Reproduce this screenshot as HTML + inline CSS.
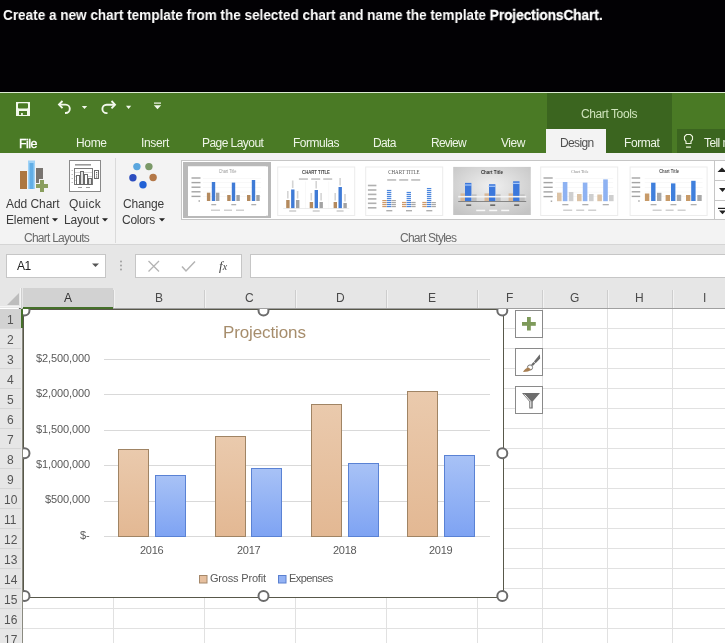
<!DOCTYPE html>
<html><head><meta charset="utf-8">
<style>
*{box-sizing:border-box;margin:0;padding:0}
html,body{width:725px;height:643px;overflow:hidden;background:#fff}
body{position:relative;font-family:"Liberation Sans",sans-serif}
.a{position:absolute}
.t{position:absolute;white-space:nowrap;line-height:1;will-change:transform}
svg{position:absolute;overflow:visible}
</style></head><body>
<div class="a" style="left:0px;top:0px;width:725px;height:92px;background:#020104;"></div>
<div class="t" id="instr" style="left:3px;top:7.57px;font-size:14.8px;color:#fff;font-weight:bold;transform:scaleX(0.92);transform-origin:0 0;letter-spacing:-0.04px">Create a new chart template from the selected chart and name the template <b id="pc" style="font-weight:bold;-webkit-text-stroke:0.3px #fff">ProjectionsChart</b>.</div>
<div class="a" style="left:0px;top:92px;width:725px;height:1px;background:#dcebd2;"></div>
<div class="a" style="left:0px;top:93px;width:725px;height:60px;background:#4a7a25;"></div>
<div class="a" style="left:547px;top:93px;width:125px;height:60px;background:#3b651f;"></div>
<div class="a" style="left:546px;top:129px;width:60px;height:24px;background:#f3f3f3;"></div>
<div class="a" style="left:677px;top:129px;width:48px;height:24px;background:#3b651f;"></div>
<div class="t" style="left:581.00px;top:108.04px;font-size:12px;color:#cfe4bc;letter-spacing:-0.407px;">Chart Tools</div>
<div class="t" style="left:19.00px;top:137.62px;font-size:12.5px;color:#ffffff;letter-spacing:-0.535px;-webkit-text-stroke:0.35px #fff">File</div>
<div class="t" style="left:76.10px;top:137.24px;font-size:12px;color:#eef5e8;letter-spacing:-0.353px;">Home</div>
<div class="t" style="left:140.70px;top:137.24px;font-size:12px;color:#eef5e8;letter-spacing:-0.336px;">Insert</div>
<div class="t" style="left:201.50px;top:137.24px;font-size:12px;color:#eef5e8;letter-spacing:-0.554px;">Page Layout</div>
<div class="t" style="left:292.50px;top:137.24px;font-size:12px;color:#eef5e8;letter-spacing:-0.501px;">Formulas</div>
<div class="t" style="left:373.20px;top:137.24px;font-size:12px;color:#eef5e8;letter-spacing:-0.637px;">Data</div>
<div class="t" style="left:431.20px;top:137.24px;font-size:12px;color:#eef5e8;letter-spacing:-0.758px;">Review</div>
<div class="t" style="left:500.70px;top:137.24px;font-size:12px;color:#eef5e8;letter-spacing:-0.449px;">View</div>
<div class="t" style="left:623.60px;top:137.24px;font-size:12px;color:#eef5e8;letter-spacing:-0.434px;">Format</div>
<div class="t" style="left:559.60px;top:137.24px;font-size:12px;color:#505050;letter-spacing:-0.626px;">Design</div>
<div class="t" style="left:704.30px;top:137.24px;font-size:12px;color:#eef5e8;letter-spacing:-0.573px;">Tell me</div>
<svg style="left:0;top:0" width="1" height="1"><path d="M686 143.5 V141.5 L684.5 139.5 V136.5 L686.5 134.5 H690.5 L692.5 136.5 V139.5 L691 141.5 V143.5 Z" fill="none" stroke="#eef5e0" stroke-width="1.1"/><rect x="686" y="146.5" width="5" height="1.2" fill="#eef5e0"/></svg>
<svg style="left:0;top:0" width="1" height="1"><rect x="16" y="102" width="14" height="14" fill="#f2f8ec"/><rect x="18" y="103.2" width="10" height="5.4" rx="1" fill="#4a7a25"/><rect x="19" y="111" width="8" height="4" fill="#4a7a25"/><rect x="21.1" y="113" width="1.7" height="2" fill="#f2f8ec"/><path d="M62.5 101 L59 104.6 L62.5 108.2" fill="none" stroke="#f2f8ec" stroke-width="1.9" stroke-linejoin="miter"/><path d="M59.5 104.6 H65.6 A4.2 4.2 0 0 1 65.6 113 H65" fill="none" stroke="#f2f8ec" stroke-width="1.9"/><path d="M81.8 106 H87.2 L84.5 109 Z" fill="#f2f8ec"/><path d="M111.5 101 L115 104.7 L111.5 108.4" fill="none" stroke="#f2f8ec" stroke-width="1.9"/><path d="M114.5 104.7 H106.6 A4.2 4.2 0 0 0 106.6 113.1 H107.5" fill="none" stroke="#f2f8ec" stroke-width="1.9"/><path d="M126 105.8 H131.2 L128.6 108.9 Z" fill="#f2f8ec"/><rect x="154" y="102.5" width="7" height="1.2" fill="#f2f8ec"/><path d="M153.8 105.3 H161.2 L157.5 109.2 Z" fill="#f2f8ec"/></svg>
<div class="a" style="left:0px;top:153px;width:725px;height:91px;background:#f3f3f3;"></div>
<div class="a" style="left:0px;top:244px;width:725px;height:1px;background:#d5d5d5;"></div>
<div class="a" style="left:115px;top:158px;width:1px;height:85px;background:#dadada;"></div>
<div class="t" style="left:5.50px;top:198.14px;font-size:12px;color:#3c3c3c;letter-spacing:-0.059px;">Add Chart</div>
<div class="t" style="left:5.50px;top:214.34px;font-size:12px;color:#3c3c3c;letter-spacing:-0.146px;">Element</div>
<svg style="left:52px;top:218px" width="6" height="4"><path d="M0 0.3 H6 L3 3.6Z" fill="#222"/></svg>
<div class="t" style="left:69.00px;top:198.14px;font-size:12px;color:#3c3c3c;letter-spacing:0.265px;">Quick</div>
<div class="t" style="left:64.00px;top:214.34px;font-size:12px;color:#3c3c3c;letter-spacing:-0.172px;">Layout</div>
<svg style="left:102px;top:218px" width="6" height="4"><path d="M0 0.3 H6 L3 3.6Z" fill="#222"/></svg>
<div class="t" style="left:123.00px;top:198.14px;font-size:12px;color:#3c3c3c;letter-spacing:-0.173px;">Change</div>
<div class="t" style="left:122.00px;top:214.34px;font-size:12px;color:#3c3c3c;letter-spacing:-0.280px;">Colors</div>
<svg style="left:159px;top:218px" width="6" height="4"><path d="M0 0.3 H6 L3 3.6Z" fill="#222"/></svg>
<div class="t" style="left:24.00px;top:231.84px;font-size:12px;color:#6a6a6a;letter-spacing:-0.747px;">Chart Layouts</div>
<div class="t" style="left:399.70px;top:231.84px;font-size:12px;color:#6a6a6a;letter-spacing:-0.763px;">Chart Styles</div>
<svg style="left:0;top:0" width="1" height="1" viewBox="0 0 1 1"><rect x="20" y="171" width="7" height="18" fill="#ad7740"/><rect x="28" y="160.5" width="7" height="28.5" fill="#9fd2f6"/><rect x="29.5" y="163" width="4" height="26" fill="#62aee6"/><rect x="36" y="168" width="7" height="15" fill="#787470"/><path d="M39 179 h6 v4 h4 v6 h-4 v4 h-6 v-4 h-4 v-6 h4z" fill="#f3f3f3"/><rect x="40" y="180" width="4" height="12" fill="#8a9e5e"/><rect x="36" y="184" width="12" height="4" fill="#8a9e5e"/></svg>
<svg style="left:0;top:0" width="1" height="1"><rect x="69.5" y="160.5" width="31" height="31" fill="#fff" stroke="#8a8a8a"/><rect x="75" y="164" width="16" height="1.6" fill="#9a9a9a"/><rect x="74.5" y="168.5" width="18" height="16" fill="#fff" stroke="#7a7a7a"/><rect x="75" y="172" width="17" height="0.6" fill="#bbb"/><rect x="75" y="176" width="17" height="0.6" fill="#bbb"/><rect x="75" y="180" width="17" height="0.6" fill="#bbb"/><rect x="76.5" y="175.5" width="3" height="9" fill="#fff" stroke="#6a6a6a"/><rect x="80.5" y="171.5" width="3" height="13" fill="#e0e0e0" stroke="#6a6a6a"/><rect x="84.5" y="174.5" width="3" height="10" fill="#fff" stroke="#6a6a6a"/><rect x="88.5" y="178.5" width="3" height="6" fill="#e0e0e0" stroke="#6a6a6a"/><rect x="94.5" y="170.5" width="4" height="8" fill="#fff" stroke="#6a6a6a"/><rect x="96" y="172" width="1.2" height="1.2" fill="#666"/><rect x="96" y="174.2" width="1.2" height="1.2" fill="#666"/><rect x="96" y="176.4" width="1.2" height="1.2" fill="#666"/><rect x="71.5" y="170" width="1.5" height="0.6" fill="#999"/><rect x="71.5" y="174" width="1.5" height="0.6" fill="#999"/><rect x="71.5" y="178" width="1.5" height="0.6" fill="#999"/><rect x="71.5" y="182" width="1.5" height="0.6" fill="#999"/><rect x="78" y="187" width="4" height="1" fill="#999"/><rect x="86" y="187" width="4" height="1" fill="#999"/></svg>
<svg style="left:0;top:0" width="1" height="1"><circle cx="136.9" cy="166.6" r="3.7" fill="#5aa6de"/><circle cx="148.9" cy="166.6" r="3.7" fill="#7b9968"/><circle cx="132.9" cy="177.8" r="3.7" fill="#2c4dbf"/><circle cx="153.1" cy="177.5" r="3.7" fill="#b47848"/><circle cx="143" cy="184.7" r="3.7" fill="#2262d6"/></svg>
<div class="a" style="left:181px;top:160px;width:550px;height:60px;background:#ffffff;border:1px solid #c6c6c6"></div>
<div class="a" style="left:714px;top:160px;width:1px;height:60px;background:#c6c6c6;"></div>
<div class="a" style="left:714px;top:180px;width:11px;height:1px;background:#c6c6c6;"></div>
<div class="a" style="left:714px;top:200px;width:11px;height:1px;background:#c6c6c6;"></div>
<svg style="left:0;top:0" width="1" height="1"><path d="M717.5 172 L722 167.5 L726.5 172Z" fill="#222"/><path d="M719 188 H726 L722.5 192Z" fill="#222"/><rect x="718" y="207.8" width="8" height="1.2" fill="#222"/><path d="M719 210.5 H726 L722.5 214.2Z" fill="#222"/></svg>
<div class="a" style="left:183px;top:162px;width:88px;height:56px;background:#b9b9b9;"></div>
<svg style="left:0;top:0" width="1" height="1"><rect x="188" y="166.5" width="80" height="49.2" fill="#fff"/><rect x="188.5" y="167.0" width="77" height="48.5" fill="#fff" stroke="#fff"/><text x="218.7" y="173.3" font-family="Liberation Sans" font-size="4.6" textLength="17.7" lengthAdjust="spacingAndGlyphs" fill="#9a9a9a">Chart Title</text><rect x="191.5" y="177.3" width="9.0" height="1.4" fill="#a4a4a4"/><rect x="203.0" y="178.0" width="58" height="0.4" fill="#eeeeee"/><rect x="191.5" y="181.9" width="9.0" height="1.4" fill="#a4a4a4"/><rect x="203.0" y="182.6" width="58" height="0.4" fill="#eeeeee"/><rect x="191.5" y="186.5" width="9.0" height="1.4" fill="#a4a4a4"/><rect x="203.0" y="187.2" width="58" height="0.4" fill="#eeeeee"/><rect x="191.5" y="191.1" width="9.0" height="1.4" fill="#a4a4a4"/><rect x="203.0" y="191.8" width="58" height="0.4" fill="#eeeeee"/><rect x="191.5" y="195.7" width="9.0" height="1.4" fill="#a4a4a4"/><rect x="203.0" y="196.4" width="58" height="0.4" fill="#eeeeee"/><rect x="198.5" y="200.3" width="1.5" height="1.4" fill="#a4a4a4"/><rect x="206.9" y="192.7" width="3.4" height="8.3" fill="#b48a5e"/><rect x="211.8" y="182.0" width="3.4" height="19.0" fill="#3f7bd6"/><rect x="216.0" y="192.7" width="3.4" height="8.3" fill="#a3a3a3"/><rect x="227.2" y="195.0" width="3.4" height="6.0" fill="#b48a5e"/><rect x="231.8" y="182.6" width="3.4" height="18.4" fill="#3f7bd6"/><rect x="236.4" y="195.0" width="3.4" height="6.0" fill="#a3a3a3"/><rect x="247.0" y="195.0" width="3.4" height="6.0" fill="#b48a5e"/><rect x="251.8" y="180.0" width="3.4" height="21.0" fill="#3f7bd6"/><rect x="256.3" y="195.0" width="3.4" height="6.0" fill="#a3a3a3"/><rect x="211.3" y="204.0" width="4.9" height="1.3" fill="#b0b0b0"/><rect x="231.3" y="204.0" width="4.9" height="1.3" fill="#b0b0b0"/><rect x="251.3" y="204.0" width="4.9" height="1.3" fill="#b0b0b0"/><rect x="211.0" y="209.5" width="9.0" height="1.5" fill="#d0d0d0"/><rect x="224.0" y="209.5" width="8.0" height="1.5" fill="#d0d0d0"/><rect x="236.0" y="209.5" width="8.0" height="1.5" fill="#d0d0d0"/><rect x="277.7" y="167.0" width="77" height="48.5" fill="#fff" stroke="#ececec"/><text x="302.1" y="173.7" font-family="Liberation Sans" font-size="5" textLength="27.8" lengthAdjust="spacingAndGlyphs" fill="#444" font-weight="bold">CHART TITLE</text><rect x="298.9" y="178.3" width="9.0" height="1.5" fill="#c0c0c0"/><rect x="311.2" y="178.3" width="9.0" height="1.5" fill="#c0c0c0"/><rect x="323.2" y="178.3" width="9.0" height="1.5" fill="#c0c0c0"/><rect x="286.2" y="200.0" width="3.4" height="8.2" fill="#b48a5e"/><rect x="287.0" y="191.0" width="1.6" height="7.5" fill="#d4d4d4"/><rect x="291.1" y="189.5" width="3.4" height="18.7" fill="#3f7bd6"/><rect x="291.9" y="180.5" width="1.6" height="7.5" fill="#d4d4d4"/><rect x="296.0" y="200.0" width="3.4" height="8.2" fill="#a3a3a3"/><rect x="296.8" y="191.0" width="1.6" height="7.5" fill="#d4d4d4"/><rect x="289.2" y="210.3" width="7.0" height="1.4" fill="#c8c8c8"/><rect x="305.2" y="181.5" width="0.4" height="27" fill="#eeeeee"/><rect x="309.7" y="202.0" width="3.4" height="6.2" fill="#b48a5e"/><rect x="310.5" y="193.0" width="1.6" height="7.5" fill="#d4d4d4"/><rect x="314.6" y="190.0" width="3.4" height="18.2" fill="#3f7bd6"/><rect x="315.4" y="181.0" width="1.6" height="7.5" fill="#d4d4d4"/><rect x="319.5" y="202.0" width="3.4" height="6.2" fill="#a3a3a3"/><rect x="320.3" y="193.0" width="1.6" height="7.5" fill="#d4d4d4"/><rect x="312.7" y="210.3" width="7.0" height="1.4" fill="#c8c8c8"/><rect x="328.7" y="181.5" width="0.4" height="27" fill="#eeeeee"/><rect x="333.6" y="202.0" width="3.4" height="6.2" fill="#b48a5e"/><rect x="334.4" y="193.0" width="1.6" height="7.5" fill="#d4d4d4"/><rect x="338.5" y="187.0" width="3.4" height="21.2" fill="#3f7bd6"/><rect x="339.3" y="178.0" width="1.6" height="7.5" fill="#d4d4d4"/><rect x="343.4" y="203.0" width="3.4" height="5.2" fill="#a3a3a3"/><rect x="344.2" y="194.0" width="1.6" height="7.5" fill="#d4d4d4"/><rect x="336.6" y="210.3" width="7.0" height="1.4" fill="#c8c8c8"/><rect x="283.2" y="208.2" width="66" height="0.5" fill="#d8d8d8"/><rect x="365.7" y="167.0" width="77" height="48.5" fill="#fff" stroke="#ececec"/><text x="388.2" y="174.0" font-family="Liberation Serif" font-size="5.5" textLength="31.4" lengthAdjust="spacingAndGlyphs" fill="#555">CHART TITLE</text><rect x="387.2" y="179.2" width="9.0" height="1.5" fill="#b8b8b8"/><rect x="399.2" y="179.2" width="9.0" height="1.5" fill="#b8b8b8"/><rect x="411.2" y="179.2" width="9.0" height="1.5" fill="#b8b8b8"/><defs><pattern id="strB" width="4" height="2" patternUnits="userSpaceOnUse"><rect width="4" height="1.2" fill="#4a86de"/></pattern><pattern id="strR" width="4" height="2" patternUnits="userSpaceOnUse"><rect width="4" height="1.2" fill="#d09a68"/></pattern><pattern id="strG" width="4" height="2" patternUnits="userSpaceOnUse"><rect width="4" height="1.2" fill="#a8a8a8"/></pattern></defs><rect x="367.9" y="184.7" width="8.5" height="1.6" fill="#b0b0b0"/><rect x="367.9" y="189.2" width="8.5" height="1.6" fill="#b0b0b0"/><rect x="367.9" y="193.6" width="8.5" height="1.6" fill="#b0b0b0"/><rect x="367.9" y="198.1" width="8.5" height="1.6" fill="#b0b0b0"/><rect x="367.9" y="202.5" width="8.5" height="1.6" fill="#b0b0b0"/><rect x="367.9" y="207.0" width="8.5" height="1.6" fill="#b0b0b0"/><rect x="382.3" y="200.0" width="4.4" height="7.8" fill="url(#strR)"/><rect x="386.9" y="189.5" width="4.4" height="18.3" fill="url(#strB)"/><rect x="391.5" y="200.0" width="4.4" height="7.8" fill="url(#strG)"/><rect x="386.3" y="210.0" width="6.0" height="1.4" fill="#b0b0b0"/><rect x="402.0" y="201.5" width="4.4" height="6.3" fill="url(#strR)"/><rect x="406.6" y="191.4" width="4.4" height="16.4" fill="url(#strB)"/><rect x="411.2" y="201.5" width="4.4" height="6.3" fill="url(#strG)"/><rect x="406.0" y="210.0" width="6.0" height="1.4" fill="#b0b0b0"/><rect x="422.3" y="201.5" width="4.4" height="6.3" fill="url(#strR)"/><rect x="426.9" y="187.9" width="4.4" height="19.9" fill="url(#strB)"/><rect x="431.5" y="202.0" width="4.4" height="5.8" fill="url(#strG)"/><rect x="426.3" y="210.0" width="6.0" height="1.4" fill="#b0b0b0"/><defs><radialGradient id="t4g" cx="0.5" cy="0.4" r="0.7"><stop offset="0" stop-color="#f0f0f0"/><stop offset="1" stop-color="#c4c4c4"/></radialGradient></defs><rect x="453.2" y="166.9" width="77.6" height="48.1" fill="url(#t4g)"/><text x="480.9" y="174.2" font-family="Liberation Sans" font-size="5.2" textLength="22" lengthAdjust="spacingAndGlyphs" fill="#333" font-weight="bold">Chart Title</text><rect x="460.5" y="193.4" width="4.6" height="7.8" fill="#d8b898"/><rect x="465.0" y="182.9" width="6.4" height="18.3" fill="#3c78dc"/><rect x="472.0" y="194.4" width="4.6" height="6.8" fill="#bdbdbd"/><rect x="464.5" y="184.4" width="7.4" height="1.2" fill="#a8c8f8"/><rect x="484.5" y="193.4" width="4.6" height="7.8" fill="#d8b898"/><rect x="489.0" y="184.2" width="6.4" height="17.0" fill="#3c78dc"/><rect x="496.0" y="194.4" width="4.6" height="6.8" fill="#bdbdbd"/><rect x="488.5" y="185.7" width="7.4" height="1.2" fill="#a8c8f8"/><rect x="508.6" y="193.4" width="4.6" height="7.8" fill="#d8b898"/><rect x="513.1" y="181.3" width="6.4" height="19.9" fill="#3c78dc"/><rect x="520.1" y="194.4" width="4.6" height="6.8" fill="#bdbdbd"/><rect x="512.6" y="182.8" width="7.4" height="1.2" fill="#a8c8f8"/><rect x="458.2" y="195.9" width="68" height="1.6" fill="#f4f4f4"/><rect x="458.2" y="201.10000000000002" width="68" height="0.8" fill="#707070"/><rect x="466.2" y="204.4" width="5.0" height="1.5" fill="#606060"/><rect x="490.2" y="204.4" width="5.0" height="1.5" fill="#606060"/><rect x="514.2" y="204.4" width="5.0" height="1.5" fill="#606060"/><rect x="476.2" y="209.7" width="9.0" height="1.5" fill="#f8f8f8"/><rect x="489.2" y="209.7" width="8.0" height="1.5" fill="#f8f8f8"/><rect x="501.2" y="209.7" width="8.0" height="1.5" fill="#f8f8f8"/><rect x="540.7" y="167.0" width="77" height="48.5" fill="#fff" stroke="#ececec"/><text x="570.9" y="173.3" font-family="Liberation Serif" font-size="4.6" textLength="17.7" lengthAdjust="spacingAndGlyphs" fill="#8a8a8a">Chart Title</text><rect x="543.5" y="177.3" width="9.2" height="1.4" fill="#a4a4a4"/><rect x="555.2" y="178.0" width="58" height="0.4" fill="#eeeeee"/><rect x="543.5" y="181.9" width="9.2" height="1.4" fill="#a4a4a4"/><rect x="555.2" y="182.6" width="58" height="0.4" fill="#eeeeee"/><rect x="543.5" y="186.6" width="9.2" height="1.4" fill="#a4a4a4"/><rect x="555.2" y="187.3" width="58" height="0.4" fill="#eeeeee"/><rect x="543.5" y="191.2" width="9.2" height="1.4" fill="#a4a4a4"/><rect x="555.2" y="191.9" width="58" height="0.4" fill="#eeeeee"/><rect x="543.5" y="195.9" width="9.2" height="1.4" fill="#a4a4a4"/><rect x="555.2" y="196.6" width="58" height="0.4" fill="#eeeeee"/><rect x="550.7" y="200.5" width="1.5" height="1.4" fill="#a4a4a4"/><rect x="557.0" y="192.7" width="4.6" height="8.5" fill="#dcc3a6"/><rect x="562.8" y="182.0" width="4.6" height="19.2" fill="#8eb2f2"/><rect x="568.8" y="192.0" width="4.6" height="9.2" fill="#cfcfcf"/><rect x="577.0" y="194.0" width="4.6" height="7.2" fill="#dcc3a6"/><rect x="582.8" y="182.6" width="4.6" height="18.6" fill="#8eb2f2"/><rect x="589.0" y="194.0" width="4.6" height="7.2" fill="#cfcfcf"/><rect x="597.3" y="194.5" width="4.6" height="6.7" fill="#dcc3a6"/><rect x="603.2" y="179.4" width="4.6" height="21.8" fill="#8eb2f2"/><rect x="609.0" y="195.0" width="4.6" height="6.2" fill="#cfcfcf"/><rect x="562.3" y="204.0" width="6.1" height="1.3" fill="#b0b0b0"/><rect x="582.3" y="204.0" width="6.1" height="1.3" fill="#b0b0b0"/><rect x="602.7" y="204.0" width="6.1" height="1.3" fill="#b0b0b0"/><rect x="563.2" y="209.5" width="9.0" height="1.5" fill="#d0d0d0"/><rect x="576.2" y="209.5" width="8.0" height="1.5" fill="#d0d0d0"/><rect x="588.2" y="209.5" width="8.0" height="1.5" fill="#d0d0d0"/><rect x="630.1" y="167.0" width="77" height="48.5" fill="#fff" stroke="#ececec"/><text x="659.2" y="173.3" font-family="Liberation Sans" font-size="4.6" textLength="19.8" lengthAdjust="spacingAndGlyphs" fill="#555555" font-weight="bold">Chart Title</text><rect x="631.7" y="177.3" width="8.5" height="1.4" fill="#a4a4a4"/><rect x="644.6" y="178.0" width="58" height="0.4" fill="#eeeeee"/><rect x="631.7" y="181.9" width="8.5" height="1.4" fill="#a4a4a4"/><rect x="644.6" y="182.6" width="58" height="0.4" fill="#eeeeee"/><rect x="631.7" y="186.5" width="8.5" height="1.4" fill="#a4a4a4"/><rect x="644.6" y="187.2" width="58" height="0.4" fill="#eeeeee"/><rect x="631.7" y="191.1" width="8.5" height="1.4" fill="#a4a4a4"/><rect x="644.6" y="191.8" width="58" height="0.4" fill="#eeeeee"/><rect x="631.7" y="195.7" width="8.5" height="1.4" fill="#a4a4a4"/><rect x="644.6" y="196.4" width="58" height="0.4" fill="#eeeeee"/><rect x="638.2" y="200.3" width="1.5" height="1.4" fill="#a4a4a4"/><rect x="644.9" y="193.5" width="4.4" height="7.5" fill="#c79a68"/><rect x="651.1" y="182.7" width="4.4" height="18.3" fill="#3f7fdc"/><rect x="657.0" y="192.8" width="4.4" height="8.2" fill="#a8a8a8"/><rect x="665.6" y="195.0" width="4.4" height="6.0" fill="#c79a68"/><rect x="671.0" y="183.4" width="4.4" height="17.6" fill="#3f7fdc"/><rect x="676.8" y="194.8" width="4.4" height="6.2" fill="#a8a8a8"/><rect x="686.0" y="195.0" width="4.4" height="6.0" fill="#c79a68"/><rect x="691.2" y="180.8" width="4.4" height="20.2" fill="#3f7fdc"/><rect x="697.3" y="195.0" width="4.4" height="6.0" fill="#a8a8a8"/><rect x="650.6" y="204.0" width="5.9" height="1.3" fill="#b0b0b0"/><rect x="670.5" y="204.0" width="5.9" height="1.3" fill="#b0b0b0"/><rect x="690.7" y="204.0" width="5.9" height="1.3" fill="#b0b0b0"/><rect x="652.6" y="209.5" width="9.0" height="1.5" fill="#d0d0d0"/><rect x="665.6" y="209.5" width="8.0" height="1.5" fill="#d0d0d0"/><rect x="677.6" y="209.5" width="8.0" height="1.5" fill="#d0d0d0"/></svg>
<div class="a" style="left:0px;top:245px;width:725px;height:63px;background:#e6e6e6;"></div>
<div class="a" style="left:6px;top:254px;width:100px;height:24px;background:#fff;border:1px solid #c6c6c6"></div>
<div class="t" style="left:17.00px;top:260.34px;font-size:12px;color:#222;letter-spacing:-0.539px;">A1</div>
<svg style="left:0;top:0" width="1" height="1"><path d="M92 263.5 H99 L95.5 267Z" fill="#555"/></svg>
<svg style="left:0;top:0" width="1" height="1"><circle cx="121" cy="261.5" r="0.9" fill="#999"/><circle cx="121" cy="265.5" r="0.9" fill="#999"/><circle cx="121" cy="269.5" r="0.9" fill="#999"/></svg>
<div class="a" style="left:135px;top:254px;width:107px;height:24px;background:#fff;border:1px solid #c6c6c6"></div>
<svg style="left:0;top:0" width="1" height="1"><path d="M148.5 261 L159 271.5 M159 261 L148.5 271.5" stroke="#b4b4b4" stroke-width="1.3"/><path d="M182 266.5 L186 271 L195 261.5" fill="none" stroke="#b4b4b4" stroke-width="1.5"/></svg>
<div class="t" style="left:219px;top:259px;font-family:'Liberation Serif',serif;font-style:italic;font-size:13px;color:#444">f<span style="font-size:10px">x</span></div>
<div class="a" style="left:250px;top:254px;width:480px;height:24px;background:#fff;border:1px solid #c6c6c6"></div>
<div class="a" style="left:0px;top:308px;width:725px;height:335px;background:#fff;"></div>
<div class="a" style="left:23px;top:328px;width:702px;height:1px;background:#e1e1e1;"></div>
<div class="a" style="left:23px;top:348px;width:702px;height:1px;background:#e1e1e1;"></div>
<div class="a" style="left:23px;top:368px;width:702px;height:1px;background:#e1e1e1;"></div>
<div class="a" style="left:23px;top:388px;width:702px;height:1px;background:#e1e1e1;"></div>
<div class="a" style="left:23px;top:408px;width:702px;height:1px;background:#e1e1e1;"></div>
<div class="a" style="left:23px;top:428px;width:702px;height:1px;background:#e1e1e1;"></div>
<div class="a" style="left:23px;top:448px;width:702px;height:1px;background:#e1e1e1;"></div>
<div class="a" style="left:23px;top:468px;width:702px;height:1px;background:#e1e1e1;"></div>
<div class="a" style="left:23px;top:488px;width:702px;height:1px;background:#e1e1e1;"></div>
<div class="a" style="left:23px;top:508px;width:702px;height:1px;background:#e1e1e1;"></div>
<div class="a" style="left:23px;top:528px;width:702px;height:1px;background:#e1e1e1;"></div>
<div class="a" style="left:23px;top:548px;width:702px;height:1px;background:#e1e1e1;"></div>
<div class="a" style="left:23px;top:568px;width:702px;height:1px;background:#e1e1e1;"></div>
<div class="a" style="left:23px;top:588px;width:702px;height:1px;background:#e1e1e1;"></div>
<div class="a" style="left:23px;top:608px;width:702px;height:1px;background:#e1e1e1;"></div>
<div class="a" style="left:23px;top:628px;width:702px;height:1px;background:#e1e1e1;"></div>
<div class="a" style="left:23px;top:648px;width:702px;height:1px;background:#e1e1e1;"></div>
<div class="a" style="left:113px;top:308px;width:1px;height:335px;background:#e1e1e1;"></div>
<div class="a" style="left:204px;top:308px;width:1px;height:335px;background:#e1e1e1;"></div>
<div class="a" style="left:295px;top:308px;width:1px;height:335px;background:#e1e1e1;"></div>
<div class="a" style="left:386px;top:308px;width:1px;height:335px;background:#e1e1e1;"></div>
<div class="a" style="left:477px;top:308px;width:1px;height:335px;background:#e1e1e1;"></div>
<div class="a" style="left:542px;top:308px;width:1px;height:335px;background:#e1e1e1;"></div>
<div class="a" style="left:607px;top:308px;width:1px;height:335px;background:#e1e1e1;"></div>
<div class="a" style="left:672px;top:308px;width:1px;height:335px;background:#e1e1e1;"></div>
<div class="a" style="left:737px;top:308px;width:1px;height:335px;background:#e1e1e1;"></div>
<div class="a" style="left:23px;top:309px;width:481px;height:289px;background:#fff;border:1px solid #58584a"></div>
<div class="t" style="left:222.80px;top:323.61px;font-size:17px;color:#a68d6c;letter-spacing:-0.118px;">Projections</div>
<div class="a" style="left:104px;top:359px;width:386px;height:1px;background:#d9d9d9;"></div>
<div class="t" style="left:35.84px;top:352.89px;font-size:11px;color:#595959;letter-spacing:-0.110px;">$2,500,000</div>
<div class="a" style="left:104px;top:394px;width:386px;height:1px;background:#d9d9d9;"></div>
<div class="t" style="left:35.84px;top:388.29px;font-size:11px;color:#595959;letter-spacing:-0.110px;">$2,000,000</div>
<div class="a" style="left:104px;top:430px;width:386px;height:1px;background:#d9d9d9;"></div>
<div class="t" style="left:35.84px;top:423.69px;font-size:11px;color:#595959;letter-spacing:-0.110px;">$1,500,000</div>
<div class="a" style="left:104px;top:465px;width:386px;height:1px;background:#d9d9d9;"></div>
<div class="t" style="left:35.84px;top:459.09px;font-size:11px;color:#595959;letter-spacing:-0.110px;">$1,000,000</div>
<div class="a" style="left:104px;top:501px;width:386px;height:1px;background:#d9d9d9;"></div>
<div class="t" style="left:44.84px;top:494.49px;font-size:11px;color:#595959;letter-spacing:-0.115px;">$500,000</div>
<div class="a" style="left:104px;top:536px;width:386px;height:1px;background:#d9d9d9;"></div>
<div class="t" style="left:80.21px;top:529.89px;font-size:11px;color:#595959;letter-spacing:-0.098px;">$-</div>
<svg style="left:0;top:0" width="1" height="1"><defs><linearGradient id="gpg" x1="0" y1="0" x2="0" y2="1"><stop offset="0" stop-color="#eacaad"/><stop offset="1" stop-color="#e3b893"/></linearGradient><linearGradient id="exg" x1="0" y1="0" x2="0" y2="1"><stop offset="0" stop-color="#a8c2f6"/><stop offset="1" stop-color="#7ea3f3"/></linearGradient></defs><rect x="118.5" y="449.5" width="30" height="87" fill="url(#gpg)" stroke="#a08464" stroke-width="1"/><rect x="155.5" y="475.5" width="30" height="61" fill="url(#exg)" stroke="#5a82d4" stroke-width="1"/><rect x="215.5" y="436.5" width="30" height="100" fill="url(#gpg)" stroke="#a08464" stroke-width="1"/><rect x="251.5" y="468.5" width="30" height="68" fill="url(#exg)" stroke="#5a82d4" stroke-width="1"/><rect x="311.5" y="404.5" width="30" height="132" fill="url(#gpg)" stroke="#a08464" stroke-width="1"/><rect x="348.5" y="463.5" width="30" height="73" fill="url(#exg)" stroke="#5a82d4" stroke-width="1"/><rect x="407.5" y="391.5" width="30" height="145" fill="url(#gpg)" stroke="#a08464" stroke-width="1"/><rect x="444.5" y="455.5" width="30" height="81" fill="url(#exg)" stroke="#5a82d4" stroke-width="1"/></svg>
<div class="t" style="left:140.40px;top:545.29px;font-size:11px;color:#595959;letter-spacing:-0.268px;">2016</div>
<div class="t" style="left:236.65px;top:545.29px;font-size:11px;color:#595959;letter-spacing:-0.268px;">2017</div>
<div class="t" style="left:332.90px;top:545.29px;font-size:11px;color:#595959;letter-spacing:-0.268px;">2018</div>
<div class="t" style="left:429.15px;top:545.29px;font-size:11px;color:#595959;letter-spacing:-0.268px;">2019</div>
<svg style="left:0;top:0" width="1" height="1"><rect x="199.5" y="575.5" width="7.5" height="7.5" fill="#e6bf9e" stroke="#a5886a"/><rect x="278.5" y="575.5" width="7.5" height="7.5" fill="#93b2f4" stroke="#5a80d0"/></svg>
<div class="t" style="left:209.70px;top:572.69px;font-size:11px;color:#595959;letter-spacing:-0.189px;">Gross Profit</div>
<div class="t" style="left:288.70px;top:572.69px;font-size:11px;color:#595959;letter-spacing:-0.576px;">Expenses</div>
<div class="a" style="left:515px;top:310px;width:28px;height:28px;background:#fff;border:1px solid #8a8a8a"></div>
<div class="a" style="left:515px;top:348px;width:28px;height:28px;background:#fff;border:1px solid #8a8a8a"></div>
<div class="a" style="left:515px;top:386px;width:28px;height:28px;background:#fff;border:1px solid #8a8a8a"></div>
<svg style="left:0;top:0" width="1" height="1"><circle cx="24.5" cy="310.4" r="5" fill="#fff" stroke="#6b6b6b" stroke-width="2"/><circle cx="263.5" cy="310.4" r="5" fill="#fff" stroke="#6b6b6b" stroke-width="2"/><circle cx="502.3" cy="310.4" r="5" fill="#fff" stroke="#6b6b6b" stroke-width="2"/><circle cx="24.5" cy="453.3" r="5" fill="#fff" stroke="#6b6b6b" stroke-width="2"/><circle cx="502.3" cy="453.3" r="5" fill="#fff" stroke="#6b6b6b" stroke-width="2"/><circle cx="24.5" cy="596" r="5" fill="#fff" stroke="#6b6b6b" stroke-width="2"/><circle cx="263.5" cy="596" r="5" fill="#fff" stroke="#6b6b6b" stroke-width="2"/><circle cx="502.3" cy="596" r="5" fill="#fff" stroke="#6b6b6b" stroke-width="2"/><rect x="527" y="317" width="3.8" height="13.5" fill="#7e9a5a"/><rect x="522" y="322" width="13.8" height="3.8" fill="#7e9a5a"/><path d="M539.8 354.2 L540.2 358.6 L535.6 363.2 L534 361.6 Z" fill="#6a6a6a"/><path d="M533.6 362 L535.2 363.6 L532.8 366 L531.2 364.4 Z" fill="#6a6a6a"/><circle cx="530" cy="367.5" r="2.6" fill="#fff" stroke="#777" stroke-width="1"/><path d="M523 372 Q525 368 528.5 367.5 L531 369.5 Q529 372 523 372Z" fill="#a87f52"/><path d="M522 393 H540 L532.7 401.5 V408.5 H529.3 V401.5 Z" fill="#6e6e6e"/><path d="M524.5 394.5 L530.8 401.5 V407.5" fill="none" stroke="#fff" stroke-width="1"/></svg>
<div class="a" style="left:0px;top:288px;width:725px;height:20px;background:#e6e6e6;"></div>
<svg style="left:0;top:0" width="1" height="1"><path d="M19 293 V305 H7Z" fill="#bdbdbd"/></svg>
<div class="a" style="left:19.5px;top:288px;width:1.5px;height:20px;background:#f4f4f4;"></div>
<div class="a" style="left:0px;top:305.5px;width:21px;height:1.5px;background:#f4f4f4;"></div>
<div class="a" style="left:21px;top:288px;width:1px;height:21px;background:#cfcfcf;"></div>
<div class="a" style="left:23px;top:288px;width:90px;height:20px;background:#d2d2d2;"></div>
<div class="a" style="left:113px;top:290px;width:1px;height:18px;background:#cdcdcd;"></div>
<div class="a" style="left:114px;top:290px;width:1px;height:18px;background:#f2f2f2;"></div>
<div class="t" style="left:64.00px;top:292.34px;font-size:12px;color:#333;">A</div>
<div class="a" style="left:204px;top:290px;width:1px;height:18px;background:#cdcdcd;"></div>
<div class="a" style="left:205px;top:290px;width:1px;height:18px;background:#f2f2f2;"></div>
<div class="t" style="left:154.50px;top:292.34px;font-size:12px;color:#4a4a4a;">B</div>
<div class="a" style="left:295px;top:290px;width:1px;height:18px;background:#cdcdcd;"></div>
<div class="a" style="left:296px;top:290px;width:1px;height:18px;background:#f2f2f2;"></div>
<div class="t" style="left:245.17px;top:292.34px;font-size:12px;color:#4a4a4a;">C</div>
<div class="a" style="left:386px;top:290px;width:1px;height:18px;background:#cdcdcd;"></div>
<div class="a" style="left:387px;top:290px;width:1px;height:18px;background:#f2f2f2;"></div>
<div class="t" style="left:336.17px;top:292.34px;font-size:12px;color:#4a4a4a;">D</div>
<div class="a" style="left:477px;top:290px;width:1px;height:18px;background:#cdcdcd;"></div>
<div class="a" style="left:478px;top:290px;width:1px;height:18px;background:#f2f2f2;"></div>
<div class="t" style="left:427.50px;top:292.34px;font-size:12px;color:#4a4a4a;">E</div>
<div class="a" style="left:542px;top:290px;width:1px;height:18px;background:#cdcdcd;"></div>
<div class="a" style="left:543px;top:290px;width:1px;height:18px;background:#f2f2f2;"></div>
<div class="t" style="left:505.83px;top:292.34px;font-size:12px;color:#4a4a4a;">F</div>
<div class="a" style="left:607px;top:290px;width:1px;height:18px;background:#cdcdcd;"></div>
<div class="a" style="left:608px;top:290px;width:1px;height:18px;background:#f2f2f2;"></div>
<div class="t" style="left:569.83px;top:292.34px;font-size:12px;color:#4a4a4a;">G</div>
<div class="a" style="left:672px;top:290px;width:1px;height:18px;background:#cdcdcd;"></div>
<div class="a" style="left:673px;top:290px;width:1px;height:18px;background:#f2f2f2;"></div>
<div class="t" style="left:635.17px;top:292.34px;font-size:12px;color:#4a4a4a;">H</div>
<div class="a" style="left:737px;top:290px;width:1px;height:18px;background:#cdcdcd;"></div>
<div class="a" style="left:738px;top:290px;width:1px;height:18px;background:#f2f2f2;"></div>
<div class="t" style="left:702.83px;top:292.34px;font-size:12px;color:#4a4a4a;">I</div>
<div class="a" style="left:22px;top:308px;width:703px;height:1px;background:#a0a0a0;"></div>
<div class="a" style="left:23px;top:307px;width:90px;height:2px;background:#45702a;"></div>
<div class="a" style="left:0px;top:309px;width:22px;height:334px;background:#e6e6e6;"></div>
<div class="a" style="left:0px;top:309px;width:21px;height:19px;background:#d2d2d2;"></div>
<div class="a" style="left:0px;top:328px;width:21px;height:1px;background:#d6d6d6;"></div>
<div class="t" style="left:7.26px;top:314.34px;font-size:12px;color:#555;">1</div>
<div class="a" style="left:0px;top:348px;width:21px;height:1px;background:#d6d6d6;"></div>
<div class="t" style="left:7.26px;top:334.34px;font-size:12px;color:#555;">2</div>
<div class="a" style="left:0px;top:368px;width:21px;height:1px;background:#d6d6d6;"></div>
<div class="t" style="left:7.26px;top:354.34px;font-size:12px;color:#555;">3</div>
<div class="a" style="left:0px;top:388px;width:21px;height:1px;background:#d6d6d6;"></div>
<div class="t" style="left:7.26px;top:374.34px;font-size:12px;color:#555;">4</div>
<div class="a" style="left:0px;top:408px;width:21px;height:1px;background:#d6d6d6;"></div>
<div class="t" style="left:7.26px;top:394.34px;font-size:12px;color:#555;">5</div>
<div class="a" style="left:0px;top:428px;width:21px;height:1px;background:#d6d6d6;"></div>
<div class="t" style="left:7.26px;top:414.34px;font-size:12px;color:#555;">6</div>
<div class="a" style="left:0px;top:448px;width:21px;height:1px;background:#d6d6d6;"></div>
<div class="t" style="left:7.26px;top:434.34px;font-size:12px;color:#555;">7</div>
<div class="a" style="left:0px;top:468px;width:21px;height:1px;background:#d6d6d6;"></div>
<div class="t" style="left:7.26px;top:454.34px;font-size:12px;color:#555;">8</div>
<div class="a" style="left:0px;top:488px;width:21px;height:1px;background:#d6d6d6;"></div>
<div class="t" style="left:7.26px;top:474.34px;font-size:12px;color:#555;">9</div>
<div class="a" style="left:0px;top:508px;width:21px;height:1px;background:#d6d6d6;"></div>
<div class="t" style="left:3.93px;top:494.34px;font-size:12px;color:#555;">10</div>
<div class="a" style="left:0px;top:528px;width:21px;height:1px;background:#d6d6d6;"></div>
<div class="t" style="left:4.37px;top:514.34px;font-size:12px;color:#555;">11</div>
<div class="a" style="left:0px;top:548px;width:21px;height:1px;background:#d6d6d6;"></div>
<div class="t" style="left:3.93px;top:534.34px;font-size:12px;color:#555;">12</div>
<div class="a" style="left:0px;top:568px;width:21px;height:1px;background:#d6d6d6;"></div>
<div class="t" style="left:3.93px;top:554.34px;font-size:12px;color:#555;">13</div>
<div class="a" style="left:0px;top:588px;width:21px;height:1px;background:#d6d6d6;"></div>
<div class="t" style="left:3.93px;top:574.34px;font-size:12px;color:#555;">14</div>
<div class="a" style="left:0px;top:608px;width:21px;height:1px;background:#d6d6d6;"></div>
<div class="t" style="left:3.93px;top:594.34px;font-size:12px;color:#555;">15</div>
<div class="a" style="left:0px;top:628px;width:21px;height:1px;background:#d6d6d6;"></div>
<div class="t" style="left:3.93px;top:614.34px;font-size:12px;color:#555;">16</div>
<div class="a" style="left:0px;top:648px;width:21px;height:1px;background:#d6d6d6;"></div>
<div class="t" style="left:3.93px;top:634.34px;font-size:12px;color:#555;">17</div>
<div class="a" style="left:21px;top:309px;width:1px;height:334px;background:#eaeaea;"></div>
<div class="a" style="left:22px;top:309px;width:1px;height:334px;background:#8a8a80;"></div>
<div class="a" style="left:21px;top:309px;width:2px;height:19px;background:#45702a;"></div>
</body></html>
